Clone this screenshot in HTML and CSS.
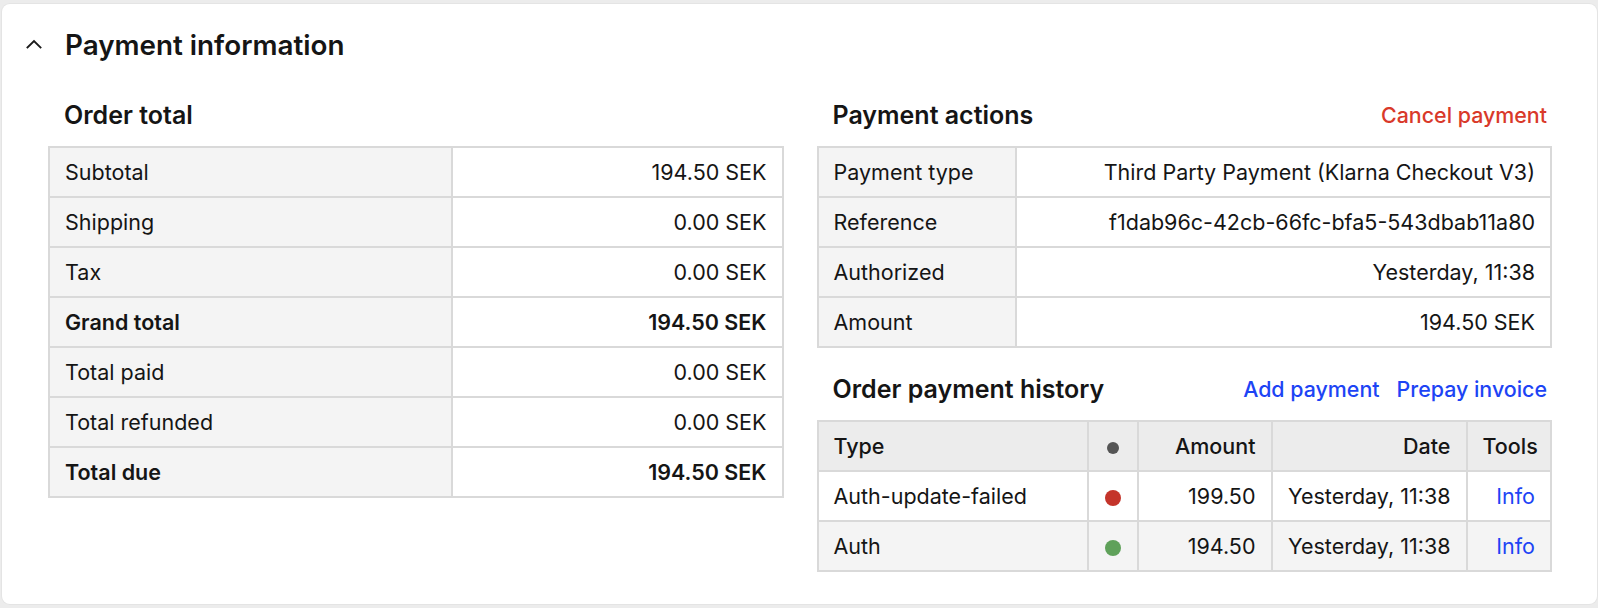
FILE: index.html
```html
<!DOCTYPE html>
<html lang="en">
<head>
<meta charset="utf-8">
<title>Payment information</title>
<link rel="stylesheet" href="styles.css">
</head>
<body>
<div class="card">
  <div class="card-header">
    <svg class="chevron" width="16" height="10" viewBox="0 0 16 10" aria-hidden="true">
      <path d="M1.5 8.5 L8 2 L14.5 8.5" fill="none" stroke="#1a1a1a" stroke-width="1.9" stroke-linecap="square"/>
    </svg>
    <h1 class="card-title">Payment information</h1>
  </div>
  <div class="card-body">
    <section class="col">
      <div class="sec-head"><h2>Order total</h2></div>
      <table class="kv totals">
        <tr><th>Subtotal</th><td>194.50 SEK</td></tr>
        <tr><th>Shipping</th><td>0.00 SEK</td></tr>
        <tr><th>Tax</th><td>0.00 SEK</td></tr>
        <tr class="strong"><th>Grand total</th><td>194.50 SEK</td></tr>
        <tr><th>Total paid</th><td>0.00 SEK</td></tr>
        <tr><th>Total refunded</th><td>0.00 SEK</td></tr>
        <tr class="strong"><th>Total due</th><td>194.50 SEK</td></tr>
      </table>
    </section>
    <section class="col">
      <div class="sec-head"><h2>Payment actions</h2><div class="links"><a class="danger" href="#">Cancel payment</a></div></div>
      <table class="kv actions">
        <tr><th>Payment type</th><td>Third Party Payment (Klarna Checkout V3)</td></tr>
        <tr><th>Reference</th><td>f1dab96c-42cb-66fc-bfa5-543dbab11a80</td></tr>
        <tr><th>Authorized</th><td>Yesterday, 11:38</td></tr>
        <tr><th>Amount</th><td>194.50 SEK</td></tr>
      </table>
      <div class="sec-head second"><h2>Order payment history</h2><div class="links"><a href="#">Add payment</a><a href="#">Prepay invoice</a></div></div>
      <table class="history">
        <colgroup>
          <col class="c-type"><col class="c-dot"><col class="c-amount"><col class="c-date"><col class="c-tools">
        </colgroup>
        <thead>
          <tr><th class="left">Type</th><th class="center"><span class="dot head"></span></th><th>Amount</th><th>Date</th><th>Tools</th></tr>
        </thead>
        <tbody>
          <tr><td class="left">Auth-update-failed</td><td class="center"><span class="dot red"></span></td><td>199.50</td><td>Yesterday, 11:38</td><td><a href="#">Info</a></td></tr>
          <tr class="alt"><td class="left">Auth</td><td class="center"><span class="dot green"></span></td><td>194.50</td><td>Yesterday, 11:38</td><td><a href="#">Info</a></td></tr>
        </tbody>
      </table>
    </section>
  </div>
</div>
</body>
</html>
```
FILE: styles.css
```css
* { box-sizing: border-box; }
html, body { margin: 0; padding: 0; }
body {
  background: #ececec;
  font-family: Inter, "Noto Sans", "Liberation Sans", sans-serif;
  color: #151515;
  padding: 4px 1px 4px 2px;
}
.card {
  background: #fff;
  border-radius: 8px;
  height: 600px;
  box-shadow: 0 0 0 1px #e4e4e4;
}
.card-header {
  display: flex;
  align-items: center;
  padding: 23px 0 0 24px;
  height: 59px;
}
.chevron { display: block; margin-right: 23px; margin-top: -2px; }
.card-title {
  margin: 0;
  font-size: 27.8px;
  font-weight: 600;
  line-height: 36px;
}
.card-body {
  display: grid;
  grid-template-columns: 1fr 1fr;
  column-gap: 33px;
  padding: 36px 45px 32px 46px;
}
.sec-head {
  display: flex;
  align-items: center;
  justify-content: space-between;
  height: 32px;
  padding: 0 5px 0 16px;
  margin-bottom: 15px;
}
.sec-head.second { margin-top: 25px; }
.sec-head h2 {
  margin: 0;
  font-size: 25px;
  font-weight: 600;
  line-height: 32px;
}
.links { display: flex; gap: 17px; font-size: 21.4px; }
.links a { color: #1d44f5; text-decoration: none; font-weight: 500; }
.links a.danger { color: #d9392a; }
table {
  width: 100%;
  border-collapse: collapse;
  font-size: 21.5px;
  border: 2px solid #d9d9d9;
}
th, td {
  border: 2px solid #d9d9d9;
  height: 50px;
  padding: 0 15px;
  font-weight: 400;
  white-space: nowrap;
}
.kv th { background: #f4f4f4; text-align: left; }
.kv td { background: #fff; text-align: right; }
.totals th { width: 55%; }
.actions th { width: 27%; }
.kv tr.strong th, .kv tr.strong td { font-weight: 600; }
.history { table-layout: fixed; }
.c-type { width: 270px; }
.c-dot { width: 50px; }
.c-amount { width: 134px; }
.c-date { width: 195px; }
.c-tools { width: auto; }
.history th, .history td { text-align: right; }
.history thead th { background: #ececec; font-weight: 500; }
.history .left { text-align: left; }
.history .center { text-align: center; padding: 0; }
.history tbody td { background: #fff; }
.history tbody tr.alt td { background: #f4f4f4; }
.history a { color: #1d44f5; text-decoration: none; }
.dot {
  display: inline-block;
  width: 16px;
  height: 16px;
  border-radius: 50%;
  vertical-align: middle;
}
.dot.head { width: 12px; height: 12px; background: #555; }
.dot.red { background: #c4342a; }
.dot.green { background: #5fa15a; }
```
